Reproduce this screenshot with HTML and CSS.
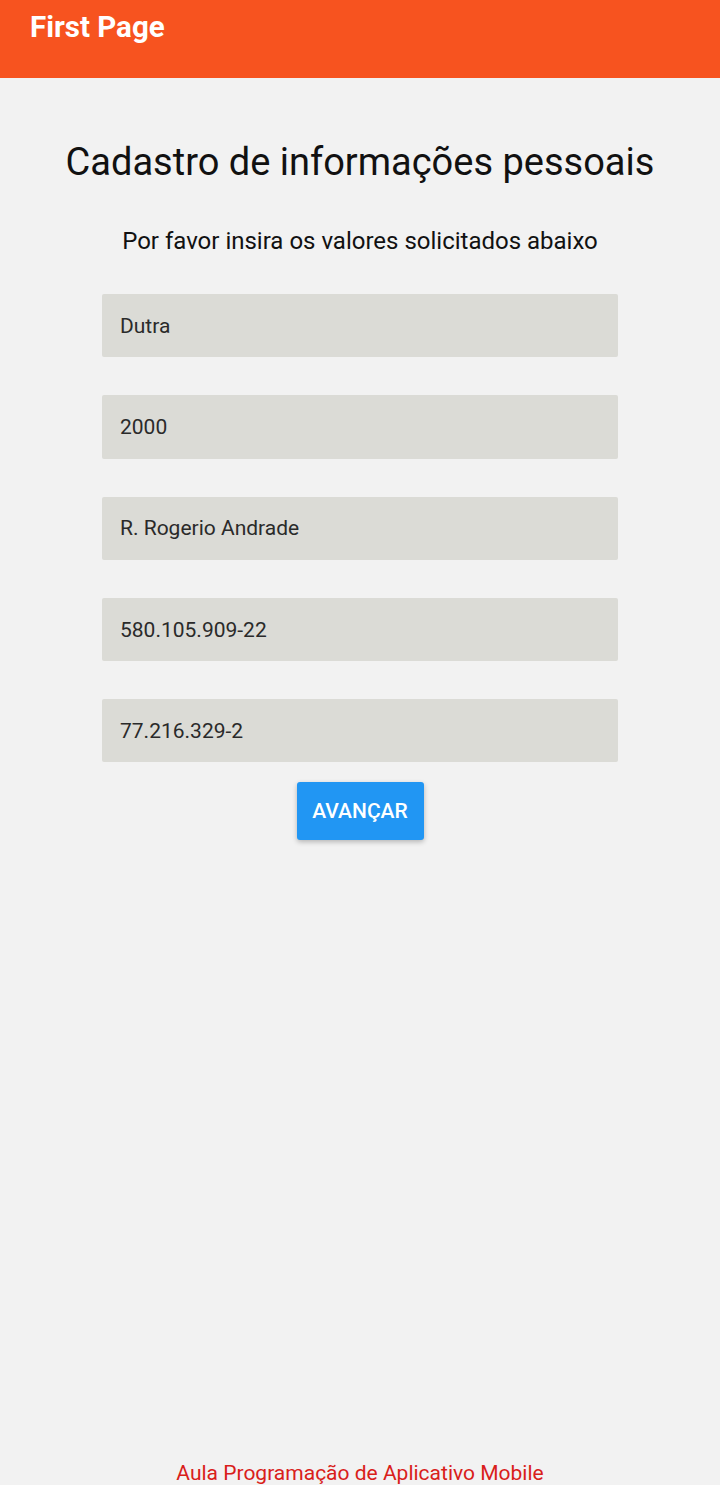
FILE: index.html
```html
<!DOCTYPE html>
<html lang="pt">
<head>
<meta charset="utf-8">
<link rel="stylesheet" href="styles.css">
</head>
<body>
<div class="screen">
  <header class="appbar"><span class="appbar-title">First Page</span></header>
  <main class="content">
    <h1 class="title">Cadastro de informações pessoais</h1>
    <p class="subtitle">Por favor insira os valores solicitados abaixo</p>
    <div class="fields">
      <div class="field">Dutra</div>
      <div class="field">2000</div>
      <div class="field">R. Rogerio Andrade</div>
      <div class="field">580.105.909-22</div>
      <div class="field">77.216.329-2</div>
    </div>
    <button class="btn">AVANÇAR</button>
  </main>
  <footer class="footer">Aula Programação de Aplicativo Mobile</footer>
</div>
</body>
</html>
```
FILE: styles.css
```css
* { box-sizing: border-box; }
html, body { margin: 0; padding: 0; }
body { background: #f2f2f2; font-family: Roboto, "Noto Sans", sans-serif; }
.screen { width: 720px; height: 1485px; display: flex; flex-direction: column; }
.appbar { height: 78px; background: #f7531f; padding: 8px 0 0 30px; }
.appbar-title { color: #fff; font-weight: 700; font-size: 29.5px; line-height: 38px; }
.content { flex: 1; display: flex; flex-direction: column; align-items: center; }
.title { margin: 60px 0 0; font-weight: 400; font-size: 38px; line-height: 48px; color: #111; }
.subtitle { margin: 40px 0 0; font-size: 24px; line-height: 30px; color: #111; }
.fields { margin-top: 38px; display: flex; flex-direction: column; gap: 38px; }
.field { width: 516px; height: 63.3px; background: #dbdbd6; border-radius: 2px; padding-left: 18px; display: flex; align-items: center; font-size: 21px; color: #2a2a2a; }
.btn { margin-top: 20px; width: 127px; height: 58px; border: none; border-radius: 3px; background: #2196f3; color: #fff; font-family: Roboto, sans-serif; font-weight: 500; font-size: 21px; box-shadow: 0 2px 5px rgba(0,0,0,0.25); }
.footer { text-align: center; color: #d9201a; font-size: 21px; line-height: 24px; padding-bottom: 0; }
```
